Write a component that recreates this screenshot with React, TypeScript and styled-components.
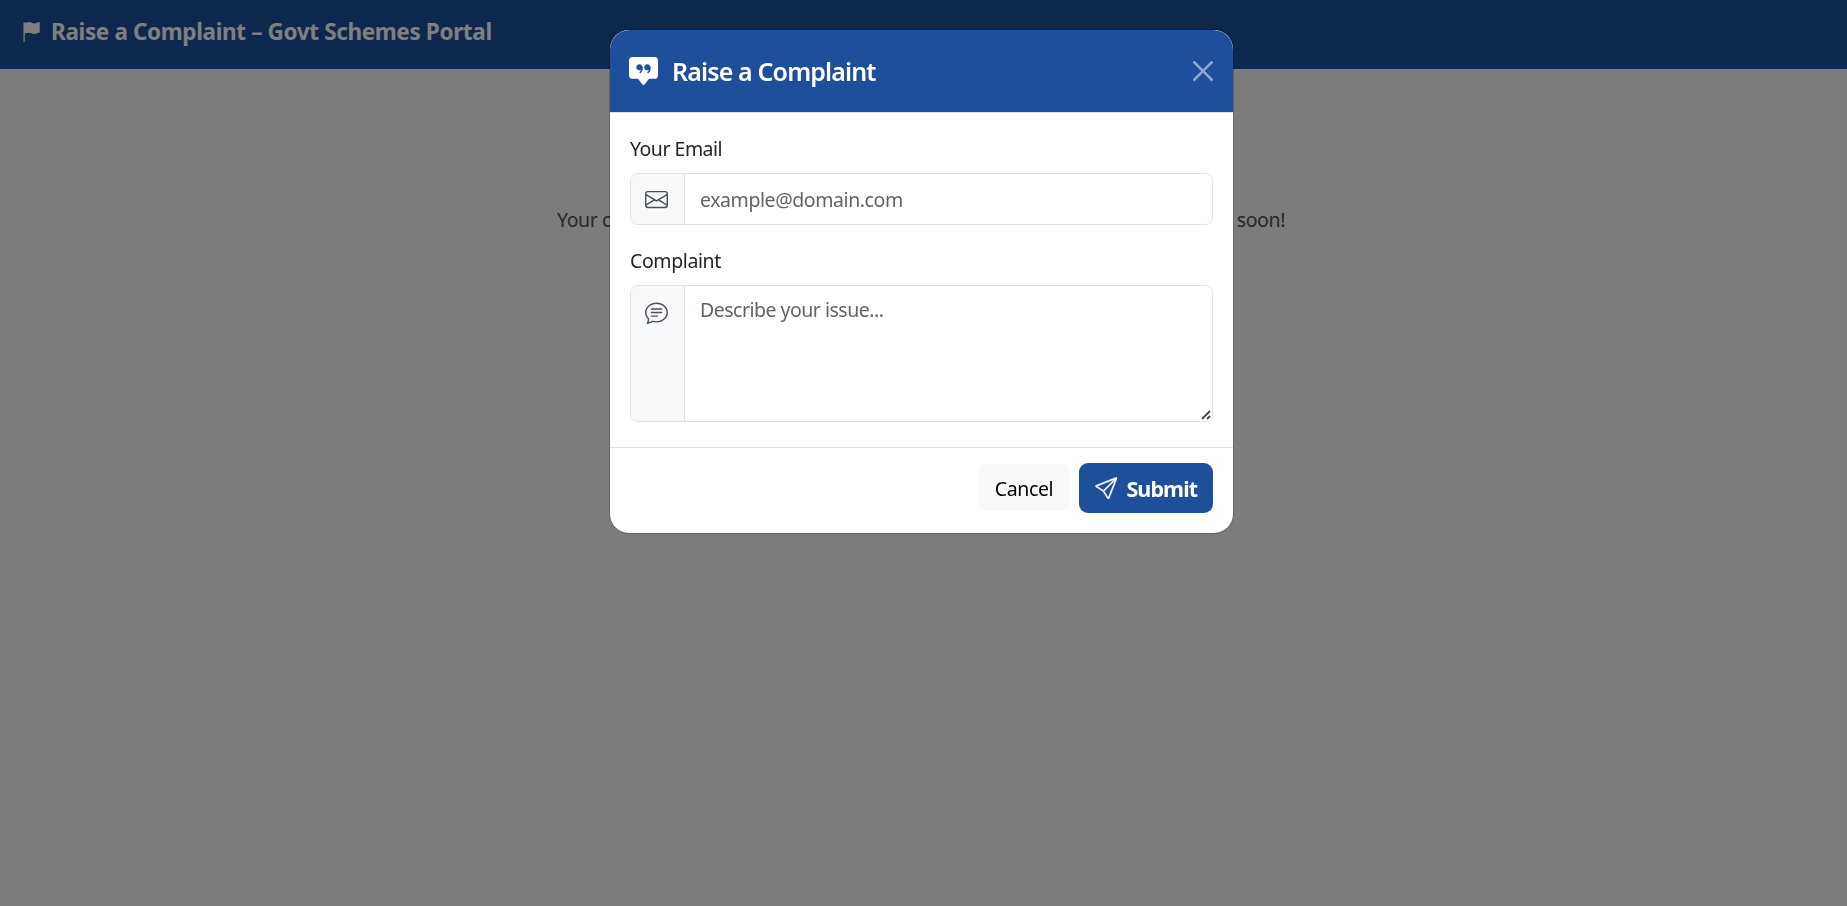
import React from 'react';
import styled, { createGlobalStyle } from 'styled-components';
import { BsFlagFill, BsChatSquareQuoteFill, BsEnvelope, BsChatText, BsSend } from 'react-icons/bs';

const GlobalStyle = createGlobalStyle`
  *, *::before, *::after { box-sizing: border-box; }
  body {
    margin: 0;
    min-height: 100vh;
    overflow: hidden;
    background: #f8f9fb;
    color: #212529;
    font: 400 19.5px/30px "Segoe UI", "Noto Sans", sans-serif;
  }
`;

const Text = styled.span<{ $spacing?: number }>`
  letter-spacing: ${(p) => p.$spacing ?? -0.4}px;
  white-space: nowrap;
`;

const Navbar = styled.header`
  height: 69px;
  padding: 17px 21px;
  display: flex;
  align-items: flex-start;
  gap: 10px;
  background: #1d4f9b;
  color: #fff;
  font-size: 22.5px;
  font-weight: 700;
  svg { width: 20px; height: 20px; margin-top: 5px; flex: none; }
`;

const Notice = styled.main`
  width: 728px;
  margin: 136px auto 0 557px;
  display: flex;
  justify-content: space-between;
  color: #4d5054;
`;

const Backdrop = styled.div`
  position: fixed;
  inset: 0;
  background: rgba(0, 0, 0, 0.5);
`;

const Overlay = styled.div`
  position: fixed;
  inset: 0;
  padding: 29px 4px 0 0;
  display: flex;
  justify-content: center;
  align-items: flex-start;
`;

const Dialog = styled.section`
  width: 625px;
  border: 1px solid rgba(0, 0, 0, 0.175);
  border-radius: 20px;
  background: #fff;
  background-clip: padding-box;
`;

const DialogHeader = styled.div`
  height: 83px;
  padding: 0 20px 0 19px;
  display: flex;
  align-items: center;
  border-bottom: 1px solid #dee2e6;
  border-radius: 20px 20px 0 0;
  background: #1d4f9b;
  color: #fff;
`;

const TitleIcon = styled(BsChatSquareQuoteFill)`
  width: 29px;
  height: 29px;
  margin: 1px 14px 0 0;
`;

const Title = styled.h2`
  margin: 0;
  flex: 1;
  font-size: 25px;
  font-weight: 600;
`;

const CloseButton = styled.button`
  width: 20px;
  height: 20px;
  padding: 0;
  border: 0;
  display: flex;
  background: none;
  color: #fff;
  opacity: 0.5;
`;

const DialogBody = styled.div`
  padding: 20px 20px 25px;
`;

const Field = styled.div`
  & + & { margin-top: 20px; }
`;

const Label = styled.label`
  display: block;
  height: 40px;
  padding-top: 1px;
`;

const InputGroup = styled.div<{ $height: number }>`
  position: relative;
  height: ${(p) => p.$height}px;
  display: flex;
  border: 1px solid #dee2e6;
  border-radius: 8px;
  overflow: hidden;
`;

const Addon = styled.div<{ $top: number }>`
  width: 54px;
  flex: none;
  padding: ${(p) => p.$top}px 2px 0 0;
  display: flex;
  justify-content: center;
  border-right: 1px solid #dee2e6;
  background: #f8f9fa;
  svg { width: 23px; height: 23px; color: #495057; }
`;

const controlStyles = `
  flex: 1;
  min-width: 0;
  border: 0;
  outline: 0;
  background: #fff;
  color: #212529;
  font: inherit;
  letter-spacing: -0.42px;
  &::placeholder { color: rgba(33, 37, 41, 0.72); opacity: 1; }
`;

const Input = styled.input`
  ${controlStyles}
  padding: 2px 15px 0;
`;

const TextArea = styled.textarea`
  ${controlStyles}
  padding: 9px 15px;
  letter-spacing: -0.5px;
  resize: none;
`;

const ResizeGrip = styled.svg`
  position: absolute;
  right: 1px;
  bottom: 1px;
  width: 10px;
  height: 10px;
  stroke: #444;
  stroke-width: 1.8;
  pointer-events: none;
`;

const DialogFooter = styled.div`
  height: 86px;
  padding: 15px 20px 0;
  display: flex;
  justify-content: flex-end;
  align-items: flex-start;
  gap: 10px;
  border-top: 1px solid #dee2e6;
`;

const Button = styled.button<{ $primary?: boolean }>`
  width: ${(p) => (p.$primary ? 134 : 90)}px;
  height: ${(p) => (p.$primary ? 50 : 47)}px;
  margin-top: ${(p) => (p.$primary ? 0 : 1)}px;
  padding: 0;
  border: 0;
  border-radius: ${(p) => (p.$primary ? 9 : 7.5)}px;
  display: flex;
  justify-content: center;
  align-items: center;
  gap: 9px;
  background: ${(p) => (p.$primary ? '#1d4f9b' : '#f8f9fa')};
  color: ${(p) => (p.$primary ? '#fff' : '#000')};
  font: inherit;
  font-size: ${(p) => (p.$primary ? 21.5 : 19.5)}px;
  font-weight: ${(p) => (p.$primary ? 700 : 400)};
  svg { width: 22.5px; height: 22.5px; stroke: currentColor; stroke-width: 0.2; }
  span { padding-top: 2px; }
`;

export default function App() {
  return (
    <>
      <GlobalStyle />
      <Navbar>
        <BsFlagFill />
        <Text $spacing={-0.36}>Raise a Complaint – Govt Schemes Portal</Text>
      </Navbar>
      <Notice>
        <Text>Your complaint has been noted.</Text>
        <Text>We will respond soon!</Text>
      </Notice>
      <Backdrop />
      <Overlay>
        <Dialog role="dialog" aria-modal="true">
          <DialogHeader>
            <TitleIcon />
            <Title><Text $spacing={-0.86}>Raise a Complaint</Text></Title>
            <CloseButton aria-label="Close">
              <svg viewBox="0 0 16 16" width="20" height="20" fill="currentColor">
                <path d="M.293.293a1 1 0 0 1 1.414 0L8 6.586 14.293.293a1 1 0 1 1 1.414 1.414L9.414 8l6.293 6.293a1 1 0 0 1-1.414 1.414L8 9.414l-6.293 6.293a1 1 0 0 1-1.414-1.414L6.586 8 .293 1.707a1 1 0 0 1 0-1.414z" />
              </svg>
            </CloseButton>
          </DialogHeader>
          <DialogBody>
            <Field>
              <Label htmlFor="email"><Text $spacing={-0.5}>Your Email</Text></Label>
              <InputGroup $height={52}>
                <Addon $top={14}><BsEnvelope /></Addon>
                <Input id="email" type="email" placeholder="example@domain.com" />
              </InputGroup>
            </Field>
            <Field>
              <Label htmlFor="complaint"><Text>Complaint</Text></Label>
              <InputGroup $height={137}>
                <Addon $top={15}><BsChatText /></Addon>
                <TextArea id="complaint" placeholder="Describe your issue..." />
                <ResizeGrip viewBox="0 0 10 10">
                  <path d="M1 9 9 1M6 9 9 6" />
                </ResizeGrip>
              </InputGroup>
            </Field>
          </DialogBody>
          <DialogFooter>
            <Button><Text>Cancel</Text></Button>
            <Button $primary><BsSend /><Text $spacing={-0.9}>Submit</Text></Button>
          </DialogFooter>
        </Dialog>
      </Overlay>
    </>
  );
}
